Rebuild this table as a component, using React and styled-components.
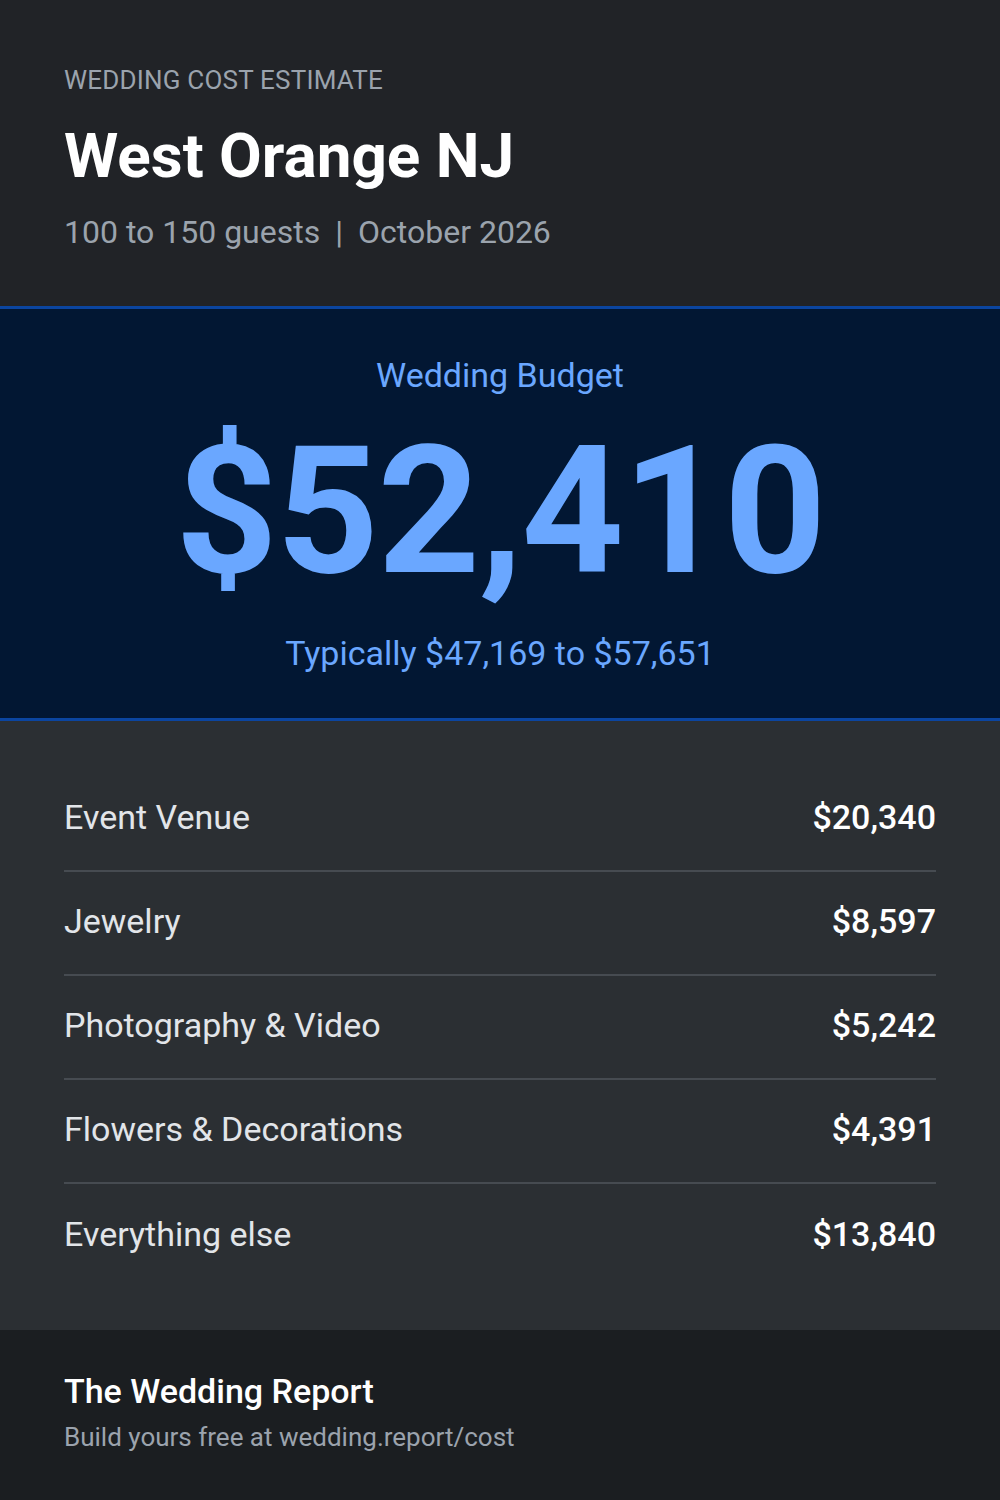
import React from 'react';
import styled, { createGlobalStyle } from 'styled-components';

const GlobalStyle = createGlobalStyle`
  html, body {
    margin: 0;
    padding: 0;
    background: #1b1e21;
  }
  body {
    font-family: Roboto, "Liberation Sans", Arial, sans-serif;
    -webkit-font-smoothing: antialiased;
  }
`;

const Card = styled.div`
  width: 1000px;
  height: 1500px;
  display: flex;
  flex-direction: column;
`;

const Header = styled.header`
  height: 306px;
  box-sizing: border-box;
  padding: 64px 64px 0;
  background: #212327;
`;

const Eyebrow = styled.div`
  font-size: 26px;
  line-height: 32px;
  color: #9ba3ad;
  text-transform: uppercase;
  letter-spacing: 0.2px;
`;

const Title = styled.h1`
  margin: 24px 0 0;
  font-size: 62px;
  line-height: 72px;
  font-weight: 700;
  color: #ffffff;
`;

const Meta = styled.div`
  margin-top: 20px;
  font-size: 32px;
  line-height: 40px;
  color: #9ba3ad;
`;

const Divider = styled.span`
  margin: 0 15px;
`;

const Hero = styled.section`
  height: 415px;
  box-sizing: border-box;
  border-top: 3px solid #0b45a0;
  border-bottom: 3px solid #0b45a0;
  background: #021733;
  display: flex;
  flex-direction: column;
  align-items: center;
  padding-top: 44px;
  color: #6aa7ff;
`;

const HeroLabel = styled.div`
  font-size: 34px;
  line-height: 44px;
`;

const Amount = styled.div`
  margin-top: 14px;
  font-size: 179px;
  line-height: 200px;
  font-weight: 700;
  letter-spacing: -1.5px;
`;

const Range = styled.div`
  margin-top: 20px;
  font-size: 34px;
  line-height: 44px;
`;

const List = styled.section`
  height: 609px;
  box-sizing: border-box;
  padding: 47px 64px 0;
  background: #2b2f33;
`;

const Row = styled.div`
  height: 104px;
  box-sizing: border-box;
  display: flex;
  align-items: center;
  justify-content: space-between;
  border-bottom: ${p => (p.last ? 'none' : '2px solid #464b51')};
  padding-bottom: 4px;
  font-size: 34px;
`;

const Label = styled.span`
  color: #e2e5e9;
`;

const Value = styled.span`
  color: #ffffff;
  font-weight: 500;
`;

const Footer = styled.footer`
  flex: 1;
  background: #1b1e21;
  padding: 40px 64px 0;
`;

const Brand = styled.div`
  font-size: 34px;
  line-height: 42px;
  font-weight: 500;
  color: #ffffff;
`;

const Cta = styled.div`
  margin-top: 9px;
  font-size: 26px;
  line-height: 32px;
  color: #9ba3ad;
`;

const items = [
  { label: 'Event Venue', value: '$20,340' },
  { label: 'Jewelry', value: '$8,597' },
  { label: 'Photography & Video', value: '$5,242' },
  { label: 'Flowers & Decorations', value: '$4,391' },
  { label: 'Everything else', value: '$13,840' },
];

export default function App() {
  return (
    <>
      <GlobalStyle />
      <Card>
        <Header>
          <Eyebrow>Wedding Cost Estimate</Eyebrow>
          <Title>West Orange NJ</Title>
          <Meta>
            100 to 150 guests<Divider>|</Divider>October 2026
          </Meta>
        </Header>
        <Hero>
          <HeroLabel>Wedding Budget</HeroLabel>
          <Amount>$52,410</Amount>
          <Range>Typically $47,169 to $57,651</Range>
        </Hero>
        <List>
          {items.map((item, i) => (
            <Row key={item.label} last={i === items.length - 1}>
              <Label>{item.label}</Label>
              <Value>{item.value}</Value>
            </Row>
          ))}
        </List>
        <Footer>
          <Brand>The Wedding Report</Brand>
          <Cta>Build yours free at wedding.report/cost</Cta>
        </Footer>
      </Card>
    </>
  );
}
